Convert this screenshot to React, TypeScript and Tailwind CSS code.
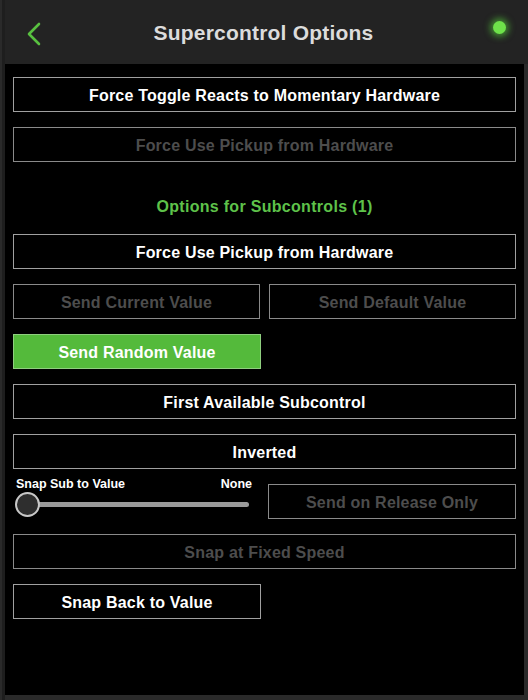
import React from "react";

const font = { fontFamily: '"Liberation Sans", Arial, sans-serif' };

function Btn({ label, disabled, active, className = "" }: { label: string; disabled?: boolean; active?: boolean; className?: string }) {
  const base = "h-[35px] flex items-center justify-center border text-[16px] font-bold tracking-[0.2px] pt-[3px] ";
  const style = active
    ? "bg-[#54ba3b] border-[#8fcf7f] text-white"
    : disabled
    ? "bg-black border-[#8a8a8a] text-[#4d4d4d]"
    : "bg-black border-[#a0a0a0] text-white";
  return <div className={base + style + " " + className}>{label}</div>;
}

export default function App() {
  return (
    <div className="w-[528px] h-[700px] bg-[#2a2a2a] flex flex-col" style={font}>
      <div className="flex-1 flex flex-col ml-[2px] border-l-[3px] border-[#1e1e1e]">
        <div className="h-[64px] bg-[#232323] flex items-center relative shrink-0">
          <svg className="absolute left-[21px] top-[21px]" width="16" height="26" viewBox="0 0 16 26">
            <path d="M13 3 L3 13 L13 23" stroke="#58c040" strokeWidth="2.6" fill="none" strokeLinecap="round" strokeLinejoin="round" />
          </svg>
          <div className="flex-1 text-center text-[21px] font-bold tracking-[0.2px] text-[#dcdcdc] pr-[6px] pt-[2px]">Supercontrol Options</div>
          <div className="absolute left-[488px] top-[21px] w-[13px] h-[13px] rounded-full bg-[#6ee24a] shadow-[0_0_6px_3px_rgba(90,220,60,0.55)]" />
        </div>
        <div className="h-[631px] mr-[4px] bg-black flex flex-col px-[8px] pt-[13px]">
          <div className="flex flex-col gap-[15px]">
            <Btn label="Force Toggle Reacts to Momentary Hardware" />
            <Btn label="Force Use Pickup from Hardware" disabled />
          </div>
          <div className="h-[72px] flex items-center justify-center text-[16px] font-bold tracking-[0.3px] text-[#5ec24a] pt-[18px]">Options for Subcontrols (1)</div>
          <div className="flex flex-col gap-[15px]">
            <Btn label="Force Use Pickup from Hardware" />
            <div className="flex gap-[9px]">
              <Btn label="Send Current Value" disabled className="flex-1" />
              <Btn label="Send Default Value" disabled className="flex-1" />
            </div>
            <div className="flex gap-[9px]">
              <Btn label="Send Random Value" active className="flex-1" />
              <div className="flex-1" />
            </div>
            <Btn label="First Available Subcontrol" />
            <Btn label="Inverted" />
            <div className="flex gap-[9px] h-[35px]">
              <div className="flex-1 flex flex-col">
                <div className="flex justify-between text-[12.5px] font-bold text-white px-[3px] -mt-[7px] leading-[14px]">
                  <span>Snap Sub to Value</span>
                  <span className="pr-[4px]">None</span>
                </div>
                <div className="relative h-[26px] mx-[2px] mt-[1px]">
                  <div className="absolute left-[6px] right-[8px] top-[10px] h-[5px] rounded-full bg-[#9a9a9a]" />
                  <div className="absolute left-[0px] top-0 w-[25px] h-[25px] rounded-full bg-[#2e2e2e] border-2 border-[#c8c8c8]" />
                </div>
              </div>
              <Btn label="Send on Release Only" disabled className="flex-1" />
            </div>
            <Btn label="Snap at Fixed Speed" disabled />
            <div className="flex gap-[9px]">
              <Btn label="Snap Back to Value" className="flex-1" />
              <div className="flex-1" />
            </div>
          </div>
        </div>
      </div>
    </div>
  );
}
